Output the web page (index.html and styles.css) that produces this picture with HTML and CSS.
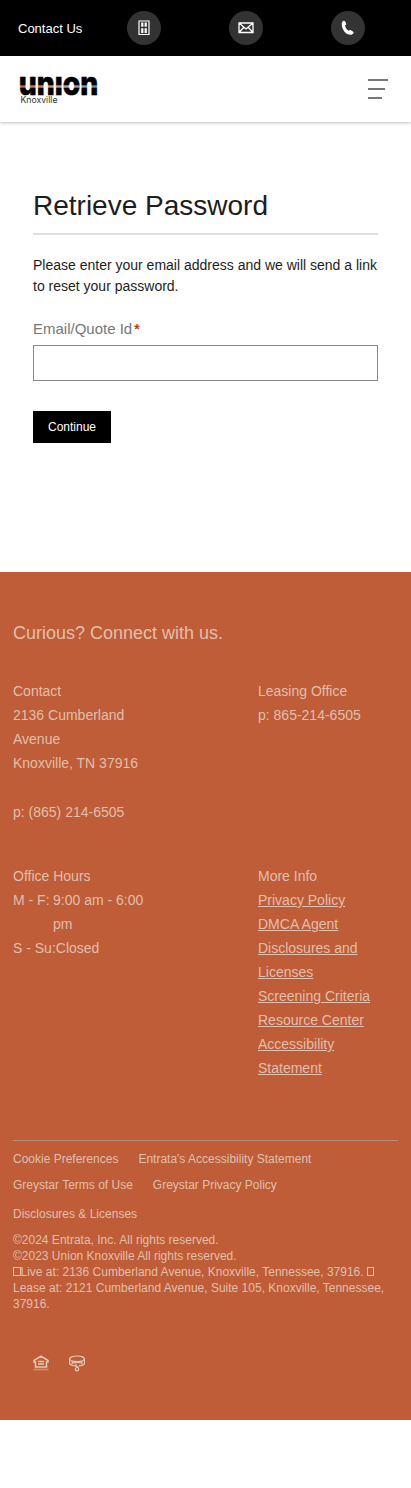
FILE: index.html
```html
<!DOCTYPE html>
<html lang="en">
<head>
<meta charset="utf-8">
<title>Retrieve Password</title>
<link rel="stylesheet" href="styles.css">
</head>
<body>
<div class="topbar">
  <span class="topbar-label">Contact Us</span>
  <a class="round" aria-label="Property"><svg width="12" height="16" viewBox="0 0 12 16"><path d="M1 1H11V14.5H1Z" fill="none" stroke="#fff" stroke-width="1.2"/><path d="M3.2 2.6H5.4V6.8H3.2ZM6.6 2.6H8.8V6.8H6.6ZM3.2 8.2H5.4V13H3.2ZM6.6 8.2H8.8V13H6.6Z" fill="#fff"/></svg></a>
  <a class="round" aria-label="Email"><svg width="16" height="12" viewBox="0 0 16 12"><path d="M1 1H15V10.5H1ZM1 1L8 7L15 1M1 10.5L5.8 5.3M15 10.5L10.2 5.3" fill="none" stroke="#fff" stroke-width="1.3"/></svg></a>
  <a class="round" aria-label="Call"><svg width="16" height="16" viewBox="0 0 16 16"><path d="M2.1 2.1C3.3 .4 4.6 .3 5.2 1.6L6.1 3.7C6.4 4.5 5.7 5.2 5 5.8C5.6 8 6.8 9.8 8.7 10.8C9.5 10.2 10.2 9.9 10.9 10.3L13.2 11.8C14.1 12.5 13.4 13.8 11.9 14.6C6.6 16.2.3 8.9 2.1 2.1Z" fill="#fff"/></svg></a>
</div>
<header class="header">
  <svg class="logo" width="80" height="30" viewBox="0 0 80 30">
    <defs>
      <linearGradient id="stripe"><stop offset="0" stop-color="#c95f38"/><stop offset=".35" stop-color="#c98f70"/><stop offset=".6" stop-color="#b5a692"/><stop offset=".8" stop-color="#6f9fae"/><stop offset="1" stop-color="#4489a3"/></linearGradient>
      <pattern id="ink" width="80" height="60" y="-30" patternUnits="userSpaceOnUse"><rect width="80" height="60"/><rect y="39.3" width="80" height="2.4" fill="url(#stripe)"/></pattern>
    </defs>
    <text class="logo-name" x="-1.3" y="19" textLength="79.5" lengthAdjust="spacingAndGlyphs" fill="url(#ink)" stroke="url(#ink)" stroke-width=".6">unıon</text>
    <text class="logo-city" x="0.5" y="27.2" textLength="37" lengthAdjust="spacingAndGlyphs">Knoxville</text>
  </svg>
  <div class="menu"><i></i><i></i><i></i></div>
</header>
<main class="main">
  <h1>Retrieve Password</h1>
  <p class="intro">Please enter your email address and we will send a link<br>to reset your password.</p>
  <label class="label" for="email">Email/Quote Id<b>*</b></label>
  <input class="field" id="email" type="text">
  <button class="continue">Continue</button>
</main>
<footer class="footer">
  <h2>Curious? Connect with us.</h2>
  <div class="grid">
    <div class="cell contact">Contact<br>2136 Cumberland<br>Avenue<br>Knoxville, TN 37916<p>p: (865) 214-6505</p></div>
    <div class="cell">Leasing Office<br>p: 865-214-6505</div>
    <div class="cell">Office Hours
      <div class="hours"><span class="day">M - F:</span><span>9:00 am - 6:00<br>pm</span></div>
      <div class="hours"><span>S - Su:</span><span>Closed</span></div>
    </div>
    <div class="cell">More Info<br><a>Privacy Policy</a><br><a>DMCA Agent</a><br><a>Disclosures and<br>Licenses</a><br><a>Screening Criteria</a><br><a>Resource Center</a><br><a>Accessibility<br>Statement</a></div>
  </div>
  <div class="legal">
    <div class="links"><span>Cookie Preferences</span><span>Entrata's Accessibility Statement</span></div>
    <div class="links"><span>Greystar Terms of Use</span><span>Greystar Privacy Policy</span></div>
    <div class="links last"><span>Disclosures &amp; Licenses</span></div>
    <p class="copy">©2024 Entrata, Inc. All rights reserved.<br>©2023 Union Knoxville All rights reserved.<br><i class="box"></i>Live at: 2136 Cumberland Avenue, Knoxville, Tennessee, 37916. <i class="box"></i><br>Lease at: 2121 Cumberland Avenue, Suite 105, Knoxville, Tennessee,<br>37916.</p>
  </div>
  <div class="badges">
    <svg width="16" height="17" viewBox="0 0 16 17"><path d="M1 5.5L8 1.2L15 5.5V7H13.5V12H2.5V7H1Z" fill="none" stroke="#e5c8b8" stroke-width="1.5"/><path d="M5 6.5H11M5 9H11" stroke="#e5c8b8" stroke-width="1.5"/><path d="M.5 14.5H15.5" stroke="#d08f70" stroke-width="1.6"/></svg>
    <svg width="18" height="17" viewBox="0 0 18 17" fill="none" stroke="#e5c8b8" stroke-width="1.2"><ellipse cx="9" cy="3.8" rx="7.4" ry="2.8"/><path d="M1.6 3.8V9C3 10.3 5 10.8 8 11M16.4 3.8V9C15 10.3 13 10.8 11 10.9M4.2 6V8.2C7 7.3 11 7.3 13.8 8.2V6M8 9V11L10.5 12.2"/><circle cx="9" cy="14.2" r="1.7"/></svg>
  </div>
</footer>
</body>
</html>
```
FILE: styles.css
```css
* { box-sizing: border-box; }
body { margin: 0; background: #fff; color: #1d1d1d; font-family: "Liberation Sans", Arial, sans-serif; white-space: nowrap; }
p, h1, h2 { margin: 0; font-weight: 400; }
svg { display: block; }
.topbar { height: 56px; background: #000; color: #fff; display: flex; align-items: center; padding-left: 18px; }
.topbar-label { width: 108.5px; font-size: 13px; }
.round { width: 34px; height: 34px; margin-right: 68px; flex: none; border-radius: 50%; background: #333; display: flex; align-items: center; justify-content: center; }
.round:last-child { margin-right: 0; }
.header { height: 66px; display: flex; justify-content: space-between; padding: 20px 23px 0 20px; box-shadow: 0 1px 3px rgba(0,0,0,.25); }
.logo { overflow: visible; }
.logo-name { font: 800 32px Inter, sans-serif; }
.logo-city { font: 8.5px Inter, sans-serif; fill: #333; }
.menu { width: 20px; display: flex; flex-direction: column; gap: 7px; padding-top: 3px; }
.menu i { height: 2px; background: #777; }
.menu i:nth-child(2) { width: 17px; }
.menu i:nth-child(3) { width: 14px; }
.main { height: 450px; padding: 64px 33px 0; }
h1 { height: 49px; border-bottom: 2px solid #e0e0e0; font-size: 28px; line-height: 40px; }
.intro { margin-top: 20px; font-size: 14px; line-height: 21px; }
.label { display: block; margin-top: 22px; height: 26px; line-height: 20px; font-size: 15px; color: #777; }
.label b { color: #b8421d; margin-left: 2px; font-size: 14px; }
.field { display: block; width: 100%; height: 36px; border: 1px solid #888; background: #fff; }
.continue { display: block; width: 78px; height: 32px; margin-top: 30px; padding: 0; border: 0; background: #000; color: #fff; font: 12px "Liberation Sans", Arial, sans-serif; }
.footer { height: 848px; background: #be5d37; color: #e2bfad; padding: 49px 13px 0; }
h2 { font-size: 18px; line-height: 24px; }
.grid { display: grid; grid-template-columns: 245px 1fr; grid-template-rows: 185px 276px; padding-top: 34px; font-size: 14px; line-height: 24px; }
.contact p { margin-top: 25px; }
.cell a { text-decoration: underline; }
.hours { display: flex; }
.day { width: 40px; }
.legal { border-top: 1px solid #ba8a78; font-size: 12px; padding-top: 5px; }
.links { height: 26px; line-height: 26px; display: flex; gap: 20px; }
.last { padding-top: 3px; height: 34px; }
.copy { line-height: 16px; }
.box { display: inline-block; width: 7.5px; height: 9px; border: 1px solid #e2bfad; }
.badges { display: flex; gap: 19px; padding: 43px 20px 0; }
```
